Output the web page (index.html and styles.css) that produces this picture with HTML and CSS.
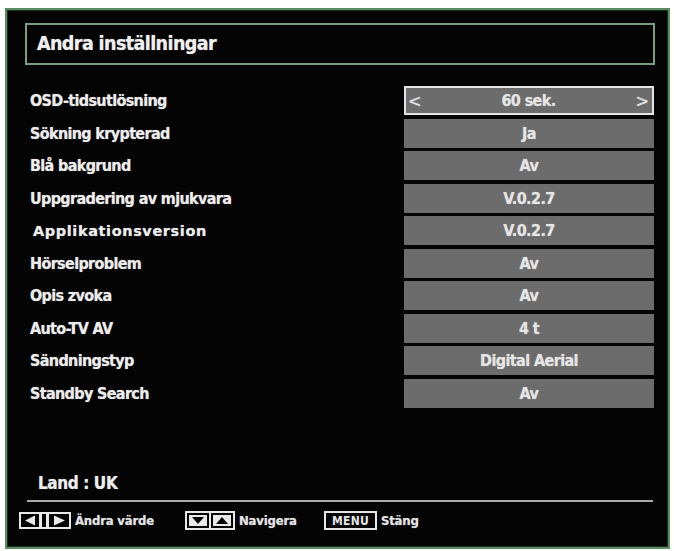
FILE: index.html
```html
<!DOCTYPE html>
<html lang="sv">
<head>
<meta charset="utf-8">
<title>Andra inställningar</title>
<link rel="stylesheet" href="styles.css">
</head>
<body>
<div class="panel">
  <div class="title"><span class="title-text">Andra inställningar</span></div>
  <div class="rows">
    <div class="row"><div class="label">OSD-tidsutlösning</div><div class="value selected"><span class="arrow">&lt;</span><span class="vtext">60 sek.</span><span class="arrow">&gt;</span></div></div>
    <div class="row"><div class="label">Sökning krypterad</div><div class="value"><span class="vtext">Ja</span></div></div>
    <div class="row"><div class="label">Blå bakgrund</div><div class="value"><span class="vtext">Av</span></div></div>
    <div class="row"><div class="label">Uppgradering av mjukvara</div><div class="value"><span class="vtext">V.0.2.7</span></div></div>
    <div class="row"><div class="label label-alt">Applikationsversion</div><div class="value"><span class="vtext">V.0.2.7</span></div></div>
    <div class="row"><div class="label">Hörselproblem</div><div class="value"><span class="vtext">Av</span></div></div>
    <div class="row"><div class="label">Opis zvoka</div><div class="value"><span class="vtext">Av</span></div></div>
    <div class="row"><div class="label">Auto-TV AV</div><div class="value"><span class="vtext">4 t</span></div></div>
    <div class="row"><div class="label">Sändningstyp</div><div class="value"><span class="vtext">Digital Aerial</span></div></div>
    <div class="row"><div class="label">Standby Search</div><div class="value"><span class="vtext">Av</span></div></div>
  </div>
  <div class="land">Land : UK</div>
  <div class="sep"></div>
  <div class="footer">
    <div class="hint">
      <svg class="key key-lr" width="52" height="17" viewBox="0 0 52 17">
        <rect x="1" y="1" width="50" height="15" fill="#000" stroke="#e8e8e8" stroke-width="2"/>
        <polygon points="6,8.5 16,3.5 16,13.5" fill="#e8e8e8"/>
        <rect x="20" y="2" width="3" height="13" fill="#e8e8e8"/>
        <rect x="27" y="2" width="3" height="13" fill="#e8e8e8"/>
        <polygon points="46,8.5 35,3.5 35,13.5" fill="#e8e8e8"/>
      </svg>
      <span class="hint-text">Ändra värde</span>
    </div>
    <div class="hint">
      <svg class="key key-ud" width="50" height="19" viewBox="0 0 50 19">
        <rect x="1" y="1" width="48" height="17" fill="#000" stroke="#e8e8e8" stroke-width="2"/>
        <rect x="4" y="4" width="18" height="11" fill="#e8e8e8"/>
        <polygon points="7,6 19,6 13,13" fill="#000"/>
        <rect x="24" y="2" width="2" height="15" fill="#e8e8e8"/>
        <rect x="28" y="4" width="18" height="11" fill="#e8e8e8"/>
        <polygon points="31,13 43,13 37,6" fill="#000"/>
      </svg>
      <span class="hint-text">Navigera</span>
    </div>
    <div class="hint">
      <span class="menu-key">MENU</span>
      <span class="hint-text">Stäng</span>
    </div>
  </div>
</div>
</body>
</html>
```
FILE: styles.css
```css
html, body {
  margin: 0;
  padding: 0;
  background: #ffffff;
}
body {
  font-family: "DejaVu Sans Condensed", "DejaVu Sans", "Liberation Sans Narrow", sans-serif;
  font-stretch: condensed;
  color: #e9e9e9;
}
.panel {
  box-sizing: border-box;
  width: 665px;
  height: 541px;
  margin: 8px 0 0 5px;
  border: 2px solid #5b8c62;
  box-shadow: inset 0 0 0 1px #1c2e1f;
  background: #040404;
  padding: 13px 13px 0 18px;
  display: flex;
  flex-direction: column;
}
.title {
  box-sizing: border-box;
  height: 42px;
  border: 2px solid #7f9a82;
  display: flex;
  align-items: center;
  padding-left: 10px;
  padding-bottom: 2px;
}
.title-text {
  font-size: 19.5px;
  font-weight: bold;
  letter-spacing: -0.6px;
  color: #efefef;
  text-shadow: 0 0 1px rgba(255,255,255,0.6);
}
.rows {
  margin-top: 21px;
  margin-right: 1px;
  display: flex;
  flex-direction: column;
  gap: 3.55px;
}
.row {
  display: flex;
  align-items: center;
  height: 29px;
}
.label {
  flex: 1;
  padding-left: 5px;
  font-size: 16px;
  font-weight: bold;
  letter-spacing: -0.65px;
  color: #ececec;
  text-shadow: 0 0 1px rgba(255,255,255,0.6);
}
.label-alt {
  font-family: "DejaVu Sans", sans-serif;
  font-stretch: normal;
  font-size: 14.5px;
  letter-spacing: 0.6px;
  padding-left: 8px;
}
.value {
  box-sizing: border-box;
  width: 250px;
  height: 29px;
  background: #6c6c6c;
  display: flex;
  align-items: center;
  justify-content: center;
  font-size: 16px;
  font-weight: bold;
  color: #e6e6e6;
  text-shadow: 0 0 1px rgba(255,255,255,0.5);
}
.value.selected {
  border: 2px solid #e4e4e4;
  justify-content: space-between;
  padding: 0 3px 0 2px;
}
.vtext {
  letter-spacing: -0.6px;
}
.arrow {
  font-size: 18px;
  font-weight: normal;
}
.land {
  margin-top: 64px;
  padding-left: 13px;
  font-size: 17px;
  font-weight: bold;
  line-height: 22px;
  color: #ececec;
  letter-spacing: -0.4px;
  text-shadow: 0 0 1px rgba(255,255,255,0.6);
}
.sep {
  margin: 6px 2px 0 2px;
  height: 2px;
  background: #a9a9a9;
}
.footer {
  margin-top: 8px;
  margin-left: -6px;
  display: flex;
  align-items: center;
  height: 22px;
}
.hint {
  display: flex;
  align-items: center;
  gap: 4px;
}
.hint:nth-child(1) { width: 166px; }
.hint:nth-child(2) { width: 139px; }
.key { display: block; }
.hint-text {
  font-size: 13px;
  font-weight: bold;
  color: #e4e4e4;
  letter-spacing: -0.2px;
  text-shadow: 0 0 1px rgba(255,255,255,0.5);
}
.menu-key {
  box-sizing: border-box;
  height: 19px;
  width: 53px;
  border: 2px solid #e6e6e6;
  display: flex;
  align-items: center;
  justify-content: center;
  font-size: 12px;
  font-weight: bold;
  color: #e6e6e6;
  letter-spacing: 0.3px;
}
```
